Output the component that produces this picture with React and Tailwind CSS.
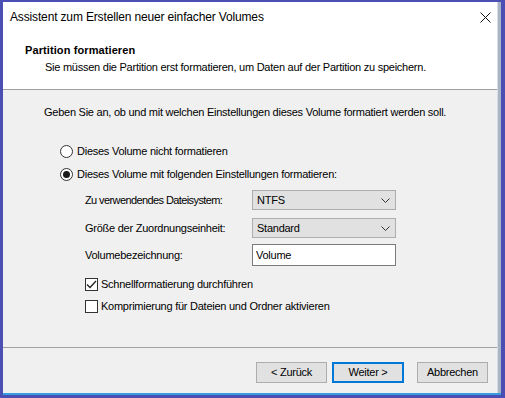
import React from 'react';

const font = { fontFamily: '"Liberation Sans", Arial, sans-serif' };

function Chevron() {
  return (
    <svg width="9" height="5" viewBox="0 0 9 5" className="shrink-0">
      <path d="M0.5 0.5 L4.5 4.5 L8.5 0.5" fill="none" stroke="#333" strokeWidth="1" />
    </svg>
  );
}

function Radio({ checked, children }) {
  return (
    <div className="flex items-center h-[15px] ml-[57px] gap-[4px]">
      <span className="w-[13px] h-[13px] rounded-full border border-[#333] bg-white flex items-center justify-center">
        {checked && <span className="w-[7px] h-[7px] rounded-full bg-[#1a1a1a]" />}
      </span>
      <span>{children}</span>
    </div>
  );
}

function Check({ checked, children, className }) {
  return (
    <div className={`flex items-center h-[13px] ml-[82px] gap-[3px] ${className}`}>
      <span className="w-[13px] h-[13px] border border-[#333] bg-white flex items-center justify-center">
        {checked && (
          <svg width="11" height="9" viewBox="0 0 11 9">
            <path d="M1 4.5 L4 7.5 L10 1" fill="none" stroke="#222" strokeWidth="1.3" />
          </svg>
        )}
      </span>
      <span>{children}</span>
    </div>
  );
}

function Select({ value }) {
  return (
    <div className="w-[144px] h-[20px] bg-[#e1e1e1] border border-[#adadad] flex items-center justify-between pl-[4px] pr-[5px]">
      <span>{value}</span>
      <Chevron />
    </div>
  );
}

function Field({ label, children, className, labelClass = '' }) {
  return (
    <div className={`flex items-center ml-[82px] ${className}`}>
      <span className={`w-[167px] ${labelClass}`}>{label}</span>
      {children}
    </div>
  );
}

function Button({ children, primary }) {
  return (
    <div
      className={`h-[21px] flex items-center justify-center bg-[#e1e1e1] ${
        primary ? 'border-2 border-[#0078d7] w-[72px]' : 'border border-[#adadad] w-[71px]'
      }`}
    >
      {children}
    </div>
  );
}

export default function App() {
  return (
    <div
      className="w-[505px] h-[398px] bg-[#4b4fb4] pt-[2px] pl-[3px] pr-[4px] pb-[3px] text-[11px] tracking-[-0.25px] text-black whitespace-nowrap"
      style={font}
    >
      <div className="flex h-full border-b-2 border-[#3b9de1]">
        <div className="flex-1 flex flex-col bg-[#f0f0f0]">
          {/* title + header */}
          <div className="bg-white">
            <div className="h-[30px] flex items-center justify-between pl-[7px] pr-[6px] text-[12px] tracking-[-0.15px]">
              <span>Assistent zum Erstellen neuer einfacher Volumes</span>
              <svg width="11" height="11" viewBox="0 0 11 11">
                <path d="M0.5 0.5 L10.5 10.5 M10.5 0.5 L0.5 10.5" stroke="#111" strokeWidth="1" />
              </svg>
            </div>
            <div className="pt-[11px] pl-[22px] pb-[14px] leading-[15px]">
              <div className="font-bold tracking-[0.1px]" style={{ fontFamily: '"Liberation Sans Narrow", "Liberation Sans", Arial, sans-serif' }}>
                Partition formatieren
              </div>
              <div className="pl-[20px] mt-[2px]">
                Sie müssen die Partition erst formatieren, um Daten auf der Partition zu speichern.
              </div>
            </div>
          </div>
          <div className="h-px bg-[#a0a0a0]" />

          {/* body */}
          <div className="flex-1 flex flex-col">
            <div className="mt-[15px] ml-[41px] h-[15px] leading-[15px]">
              Geben Sie an, ob und mit welchen Einstellungen dieses Volume formatiert werden soll.
            </div>
            <div className="mt-[24px]">
              <Radio>Dieses Volume nicht formatieren</Radio>
            </div>
            <div className="mt-[8px]">
              <Radio checked>Dieses Volume mit folgenden Einstellungen formatieren:</Radio>
            </div>
            <Field label="Zu verwendendes Dateisystem:" labelClass="tracking-[-0.6px]" className="mt-[8px]">
              <Select value="NTFS" />
            </Field>
            <Field label="Größe der Zuordnungseinheit:" className="mt-[8px]">
              <Select value="Standard" />
            </Field>
            <Field label="Volumebezeichnung:" className="mt-[6px]">
              <div className="w-[144px] h-[22px] bg-white border border-[#7a7a7a] flex items-center pl-[3px]">
                Volume
              </div>
            </Field>
            <Check checked className="mt-[12px]">Schnellformatierung durchführen</Check>
            <Check className="mt-[9px]">Komprimierung für Dateien und Ordner aktivieren</Check>
          </div>

          {/* footer */}
          <div className="h-px bg-[#a0a0a0]" />
          <div className="h-[45px] flex justify-end items-start pt-[14px] pr-[9px]">
            <Button>&lt; Zurück</Button>
            <div className="w-[5px]" />
            <Button primary>Weiter &gt;</Button>
            <div className="w-[13px]" />
            <Button>Abbrechen</Button>
          </div>
        </div>
        <div className="w-[4px] bg-[#a9b5c3] border-l border-[#d6dde6]" />
      </div>
    </div>
  );
}
